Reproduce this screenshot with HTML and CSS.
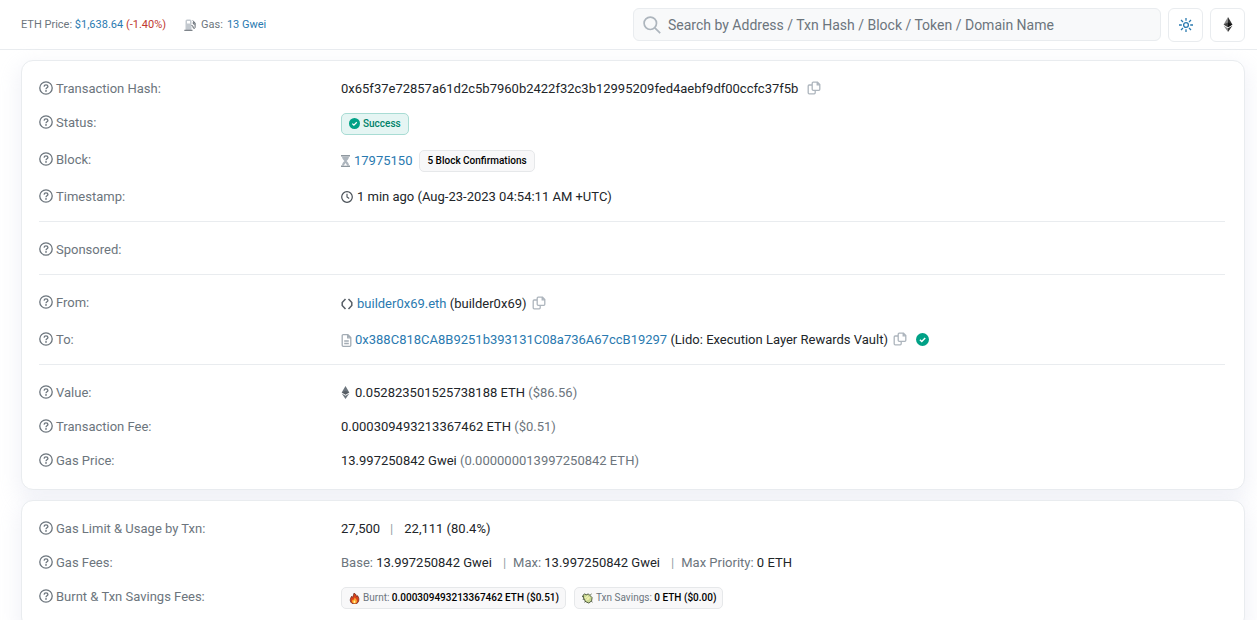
FILE: index.html
```html
<!DOCTYPE html>
<html lang="en">
<head>
<meta charset="utf-8">
<meta name="viewport" content="width=device-width, initial-scale=1">
<title>Transaction Details</title>
<link rel="stylesheet" href="styles.css">
</head>
<body>
<svg class="sprite" aria-hidden="true">
  <symbol id="help" viewBox="0 0 16 16"><circle cx="8" cy="8" r="7.1" fill="none" stroke="currentColor" stroke-width="1.5"/><path d="M5.8 6.4C5.9 5.1 6.8 4.5 8 4.5c1.300 0 2.200.7 2.200 1.800 0 1.500-2.200 1.500-2.200 3" fill="none" stroke="currentColor" stroke-width="1.500"/><circle cx="8" cy="11.300" r="1" fill="currentColor"/></symbol>
  <symbol id="copy" viewBox="0 0 14 14"><path d="M6.200 1.200h4.300l2.300 2.300v4.800a1 1 0 0 1-1 1H6.200a1 1 0 0 1-1-1V2.200a1 1 0 0 1 1-1zM10.200 1.200v2.600h2.600M5.200 4H2.200a1 1 0 0 0-1 1v6.800a1 1 0 0 0 1 1h5a1 1 0 0 0 1-1V9.300" fill="none" stroke="currentColor" stroke-width="1.300"/></symbol>
  <symbol id="check" viewBox="0 0 16 16"><circle cx="8" cy="8" r="8" fill="#00a186"/><path d="M4.800 8.200l2.300 2.200 4.200-4.300" fill="none" stroke="#fff" stroke-width="1.800"/></symbol>
  <symbol id="eth" viewBox="0 0 10 16"><path d="M5 0L.3 8 5 10.800 9.700 8z" fill="currentColor"/><path d="M.3 9.200L5 16l4.700-6.800L5 12z" fill="currentColor"/><path d="M5 5.800L.3 8 5 10.800 9.700 8z" fill="#000" opacity=".2"/></symbol>
</svg>

<header class="topbar">
  <div class="stats">
    <span>ETH Price: <a href="#">$1,638.64 <span class="down">(-1.40%)</span></a></span>
    <span class="gas"><svg class="pump" viewBox="0 0 12 12" aria-hidden="true"><path d="M1.500 11V2A1.500 1.500 0 0 1 3 .5h3A1.500 1.500 0 0 1 7.500 2v9z" fill="#c3c9cf"/><path d="M3 2h3v2.500H3z" fill="#fff"/><path d="M.3 11.300h8.200M7.500 6.500h.7c1.200 0 .6 3 1.700 3s1.200-.8 1.200-1.600V4L8.800 1.500M9.300 3v2h1.800" fill="none" stroke="#5f676f" stroke-width="1"/></svg>Gas: <a href="#">13 Gwei</a></span>
  </div>
  <div class="tools">
    <label class="search">
      <svg viewBox="0 0 18 18" aria-hidden="true"><circle cx="7.300" cy="7.300" r="6.200" fill="none" stroke="#adb5bd" stroke-width="1.700"/><path d="M11.800 11.800l5.400 5.400" stroke="#adb5bd" stroke-width="1.700"/></svg>
      <input type="text" aria-label="Search" placeholder="Search by Address / Txn Hash / Block / Token / Domain Name">
    </label>
    <button class="tool" type="button" aria-label="Theme"><svg class="sun" viewBox="0 0 14 14" aria-hidden="true"><g fill="none" stroke="#2a7ab0" stroke-width="1.300"><circle cx="7" cy="7" r="2.400"/><path d="M7 0v2.800M7 11.200V14M0 7h2.800M11.200 7H14M2 2l2 2M10 10l2 2M2 12l2-2M10 4l2-2"/></g></svg></button>
    <button class="tool" type="button" aria-label="Network"><svg class="diamond" viewBox="0 0 10 16" aria-hidden="true"><path d="M5 0L.3 8 5 10.800z" fill="#8a8a8a"/><path d="M5 0l4.700 8L5 10.800z" fill="#333"/><path d="M5 5.800L.3 8 5 10.800z" fill="#444"/><path d="M5 5.800L9.700 8 5 10.800z" fill="#111"/><path d="M.3 9.200L5 12v4z" fill="#8a8a8a"/><path d="M9.700 9.200L5 12v4z" fill="#333"/></svg></button>
  </div>
</header>

<main class="content">
  <section class="card">
    <dl class="group">
      <div class="row"><dt><svg class="help"><use href="#help"/></svg>Transaction Hash:</dt><dd><span>0x65f37e72857a61d2c5b7960b2422f32c3b12995209fed4aebf9df00ccfc37f5b</span><button class="copy" type="button" aria-label="Copy hash"><svg><use href="#copy"/></svg></button></dd></div>
      <div class="row tall"><dt><svg class="help"><use href="#help"/></svg>Status:</dt><dd><span class="badge success"><svg class="tick"><use href="#check"/></svg>Success</span></dd></div>
      <div class="row tall"><dt><svg class="help"><use href="#help"/></svg>Block:</dt><dd><svg class="hourglass" viewBox="0 0 9 12" aria-hidden="true"><path d="M0 0h9v1.500H0zM0 10.500h9V12H0z" fill="#8f989f"/><path d="M1 1.500h7C8 4 6.500 5 5.500 6 6.500 7 8 8 8 10.500H1C1 8 2.500 7 3.500 6 2.500 5 1 4 1 1.500z" fill="#adb5bd"/><path d="M2.800 10.500L4.500 8l1.700 2.500z" fill="#fff"/></svg><a href="#">17975150</a><span class="badge strong after-link">5 Block Confirmations</span></dd></div>
      <div class="row"><dt><svg class="help"><use href="#help"/></svg>Timestamp:</dt><dd><svg class="clock" viewBox="0 0 12 12" aria-hidden="true"><circle cx="6" cy="6" r="5.300" fill="none" stroke="#495057" stroke-width="1.200"/><path d="M6 2.800V6l2.200 1.500" fill="none" stroke="#495057" stroke-width="1.100"/></svg><span>1 min ago (Aug-23-2023 04:54:11 AM +UTC)</span></dd></div>
    </dl>
    <dl class="group">
      <div class="row"><dt><svg class="help"><use href="#help"/></svg>Sponsored:</dt><dd></dd></div>
    </dl>
    <dl class="group">
      <div class="row tall"><dt><svg class="help"><use href="#help"/></svg>From:</dt><dd><svg class="clock" viewBox="0 0 12 12" aria-hidden="true"><path d="M4.500 1L1.200 4.500v3L4.500 11M7.500 1l3.300 3.500v3L7.500 11" fill="none" stroke="#555d65" stroke-width="1.500"/></svg><span><a href="#">builder0x69.eth</a> (builder0x69)</span><button class="copy near" type="button" aria-label="Copy sender"><svg><use href="#copy"/></svg></button></dd></div>
      <div class="row"><dt><svg class="help"><use href="#help"/></svg>To:</dt><dd><svg class="doc" viewBox="0 0 10 13" aria-hidden="true"><path d="M1.600.7h4.800l2.900 2.900v7.700a1 1 0 0 1-1 1H1.700a1 1 0 0 1-1-1V1.600a.9.9 0 0 1 .9-.9zM6.200.7v3.200h3.100M2.700 7h4.600M2.700 9.500h4.600" fill="none" stroke="#a3acb4" stroke-width="1.300"/></svg><span><a href="#">0x388C818CA8B9251b393131C08a736A67ccB19297</a> (Lido: Execution Layer Rewards Vault)</span><button class="copy near" type="button" aria-label="Copy recipient"><svg><use href="#copy"/></svg></button><svg class="verified"><use href="#check"/></svg></dd></div>
    </dl>
    <dl class="group">
      <div class="row"><dt><svg class="help"><use href="#help"/></svg>Value:</dt><dd><svg class="ethmark"><use href="#eth"/></svg><span>0.052823501525738188 ETH <span class="muted">($86.56)</span></span></dd></div>
      <div class="row"><dt><svg class="help"><use href="#help"/></svg>Transaction Fee:</dt><dd><span>0.000309493213367462 ETH <span class="muted">($0.51)</span></span></dd></div>
      <div class="row"><dt><svg class="help"><use href="#help"/></svg>Gas Price:</dt><dd><span>13.997250842 Gwei <span class="muted">(0.000000013997250842 ETH)</span></span></dd></div>
    </dl>
  </section>

  <section class="card">
    <dl class="group">
      <div class="row"><dt><svg class="help"><use href="#help"/></svg>Gas Limit &amp; Usage by Txn:</dt><dd><span>27,500</span><span class="bar">|</span><span>22,111 (80.4%)</span></dd></div>
      <div class="row"><dt><svg class="help"><use href="#help"/></svg>Gas Fees:</dt><dd><span><span class="muted">Base:</span> 13.997250842 Gwei</span><span class="bar narrow">|</span><span><span class="muted">Max:</span> 13.997250842 Gwei</span><span class="bar narrow">|</span><span><span class="muted">Max Priority:</span> 0 ETH</span></dd></div>
      <div class="row tall"><dt><svg class="help"><use href="#help"/></svg>Burnt &amp; Txn Savings Fees:</dt><dd class="badges">
        <span class="badge strong"><svg class="emoji" viewBox="0 0 12 12" aria-hidden="true"><path d="M5.500 0C8 1.500 8 3 8.300 4l.9-1.200C11 5 11 7 10.500 9 9.800 11 8 12 6 12S1.800 11 1.400 8.500C1.100 6.500 2 5 3 3.500l.7 1.300C5 3 5 1.500 5.500 0z" fill="#d9421b" stroke="#5b1c12" stroke-width=".7"/><path d="M6 4.800C8.500 7 9 8 8.500 9.800 8 11 7 11.400 6 11.400S3.600 10.800 3.400 9.300C3.200 8 4 7.500 4.500 6.800l.8 1z" fill="#ffac2f"/><path d="M6 8c1.300 1.200 1.200 3 0 3s-1.600-1.500 0-3z" fill="#fff2a6"/></svg><span><span class="muted">Burnt:</span> 0.000309493213367462 ETH ($0.51)</span></span>
        <span class="badge strong"><svg class="emoji" viewBox="0 0 12 12" aria-hidden="true"><path d="M1 2.500L3 1l1.500 1L7 1l4 4-.5 3.500L7.500 11 4 9.500 1.800 6z" fill="#c9d792" stroke="#39452c" stroke-width=".9"/><path d="M3 6l3.500-3M4.500 8l4-3.800" stroke="#eef3b8" stroke-width="1.100"/><circle cx="6.700" cy="6" r="1.300" fill="#f1efaa"/><path d="M0 4l2-.5M.8 7l2-.5M2.500 10l1.800-1M9 2l1.500-1M10 9l1.500 1" stroke="#465137" stroke-width=".9"/></svg><span><span class="muted">Txn Savings:</span> 0 ETH ($0.00)</span></span>
      </dd></div>
    </dl>
  </section>
</main>
</body>
</html>
```
FILE: styles.css
```css
* { box-sizing: border-box; }
body {
  margin: 0;
  font-family: Roboto, "Liberation Sans", sans-serif;
  font-size: 13px;
  line-height: 20px;
  color: #212529;
  background: #fff;
  overflow: hidden;
}
a { color: #2a7ab0; text-decoration: none; }
svg { flex: none; display: block; }
button { padding: 0; font: inherit; cursor: pointer; }
.sprite { display: none; }
.muted { color: #6c757d; }

.topbar {
  display: grid;
  grid-template-columns: 1fr 1fr;
  align-items: center;
  height: 50px;
  padding: 0 12px 0 21px;
  background: #fff;
  border-bottom: 1px solid #e9ecef;
}
.stats { display: flex; gap: 18px; font-size: 11px; color: #6c757d; }
.down { color: #c0392f; }
.gas { display: flex; align-items: center; gap: 4px; }
.pump { width: 12px; height: 12px; margin-right: 1px; }
.tools { display: flex; align-items: center; gap: 7px; }
.search {
  flex: 1;
  display: flex;
  align-items: center;
  gap: 7px;
  height: 33px;
  padding: 0 9px;
  background: #f8f9fa;
  border: 1px solid #e9ecef;
  border-radius: 6px;
}
.search svg { width: 18px; height: 18px; }
.search input {
  flex: 1;
  min-width: 0;
  padding: 0;
  border: 0;
  outline: 0;
  background: none;
  font: inherit;
  font-size: 14px;
  color: #212529;
}
.search input::placeholder { color: #6c757d; opacity: 1; }
.tool {
  display: flex;
  align-items: center;
  justify-content: center;
  width: 35px;
  height: 34px;
  background: #fff;
  border: 1px solid #e9ecef;
  border-radius: 6px;
}
.sun { width: 14px; height: 14px; }
.diamond { width: 10px; height: 15px; }

.content { display: grid; gap: 10px; padding: 10px 12px 12px 21px; }
.card {
  padding: 18px 19px 18px 17px;
  background: #fff;
  border: 1px solid #e9ecef;
  border-radius: 12px;
  box-shadow: 0 8px 20px 4px rgba(189, 197, 219, 0.2);
}
.group { display: grid; gap: 14px; margin: 0; }
.group + .group {
  margin-top: 14px;
  padding-top: 18px;
  border-top: 1px solid #e9ecef;
}
.row { display: grid; grid-template-columns: 302px 1fr; }
.row.tall { min-height: 23px; }
.row dt { display: flex; align-items: center; gap: 3px; height: 20px; color: #6c757d; }
.row dd { display: flex; align-items: center; margin: 0; height: 20px; }
.row.tall dd { height: 22px; }
.help { width: 14px; height: 14px; margin-bottom: 2px; }

.copy { margin: 0 0 2px 9px; border: 0; background: none; color: #adb5bd; }
.copy.near { margin-left: 5px; }
.copy svg { width: 14px; height: 14px; }
.badge {
  display: flex;
  align-items: center;
  gap: 3px;
  height: 22px;
  padding: 0 7px;
  font-size: 10px;
  font-weight: 500;
  background: #f8f8f9;
  border: 1px solid #e6e8ea;
  border-radius: 5px;
}
.strong { color: #000; }
.success { color: #00826a; background: #e5f5f3; border-color: #a8dcd4; }
.after-link { margin-left: 7px; }
.badges { gap: 8px; }
.badges .badge { padding: 0 6px 0 7px; }
.badges .muted { font-weight: 400; }
.tick { width: 11px; height: 11px; margin-bottom: 1px; }
.emoji { width: 11px; height: 11px; }
.hourglass { width: 9px; height: 12px; margin-right: 4px; }
.clock { width: 12px; height: 12px; margin-right: 4px; }
.doc { width: 11px; height: 13px; margin-right: 3px; }
.ethmark { width: 9px; height: 13px; margin: 0 5px 2px 0; color: #6c757d; }
.verified { width: 13px; height: 13px; margin: 0 0 2px 9px; }
.bar { margin: 0 11px 0 10px; color: #98a0a7; }
.bar.narrow { margin: 0 7px 0 11px; }
```
